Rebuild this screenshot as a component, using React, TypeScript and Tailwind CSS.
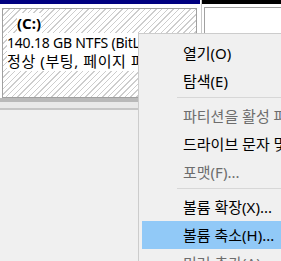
import React from "react";

type Item = { label: string; disabled?: boolean; active?: boolean } | "sep";

const items: Item[] = [
  { label: "열기(O)" },
  { label: "탐색(E)" },
  "sep",
  { label: "파티션을 활성 파티션으로 표시(M)", disabled: true },
  { label: "드라이브 문자 및 경로 변경(C)..." },
  { label: "포맷(F)...", disabled: true },
  "sep",
  { label: "볼륨 확장(X)..." },
  { label: "볼륨 축소(H)...", active: true },
  { label: "미러 추가(A)...", disabled: true },
];

const font = "font-['Noto_Sans','Noto_Sans_CJK_KR',sans-serif]";

export default function App() {
  return (
    <div className={`relative w-[281px] h-[261px] overflow-hidden bg-[#f0f0f0] text-black ${font}`}>
      {/* Volume row */}
      <div className="flex h-[98px] bg-white">
        <div className="w-[202px] flex flex-col border-r border-[#c8c8c8]">
          <div className="h-[4px] w-[200px] bg-[#000080]" />
          <div className="flex-1 pl-[2px] pr-[4px] pt-[4px]">
            <div className="h-full overflow-hidden border border-[#a0a0a0] bg-[repeating-linear-gradient(135deg,#cdcdcd_0px,#cdcdcd_1px,#ffffff_1px,#ffffff_4px)] pl-[4px] pt-[4px] whitespace-nowrap">
              <div className="h-[20px] leading-[20px] pl-[10px] text-[15px]">
                <span className="bg-white font-bold">(C:)</span>
              </div>
              <div className="h-[19px] leading-[19px] text-[14px] tracking-[-0.2px]">
                <span className="bg-white">140.18 GB NTFS (BitLocker 암호화됨)</span>
              </div>
              <div className="h-[19px] leading-[19px] text-[15px] tracking-[0.6px]">
                <span className="bg-white">정상 (부팅, 페이지 파일, 크래시 덤프)</span>
              </div>
            </div>
          </div>
        </div>
        <div className="flex-1 flex flex-col">
          <div className="h-[4px] bg-black" />
          <div className="flex-1 pl-[2px] pt-[3px]">
            <div className="h-full border-l border-t border-[#a0a0a0] bg-white" />
          </div>
        </div>
      </div>
      <div className="h-[4px] bg-[#b9b9b9]" />
      <div className="h-[6px] bg-[#e9e9e9]" />
      <div className="h-[2px] bg-[#c6c6c6]" />

      {/* Context menu */}
      <div className="absolute left-[138px] top-[33px] w-[200px] border border-[#cccccc] bg-[#f0f0f0] pt-[5px] px-[3px]">
        {items.map((item, i) =>
          item === "sep" ? (
            <div key={i} className="h-[7px] pt-[2px] pl-[35px]">
              <div className="h-[1px] bg-[#d7d7d7]" />
            </div>
          ) : (
            <div
              key={i}
              className={`h-[28px] leading-[28px] pl-[41px] text-[15px] whitespace-nowrap ${
                item.active ? "bg-[#91c9f7]" : ""
              } ${item.disabled ? "text-[#6d6d6d]" : "text-black"}`}
            >
              {item.label}
            </div>
          )
        )}
      </div>
    </div>
  );
}
